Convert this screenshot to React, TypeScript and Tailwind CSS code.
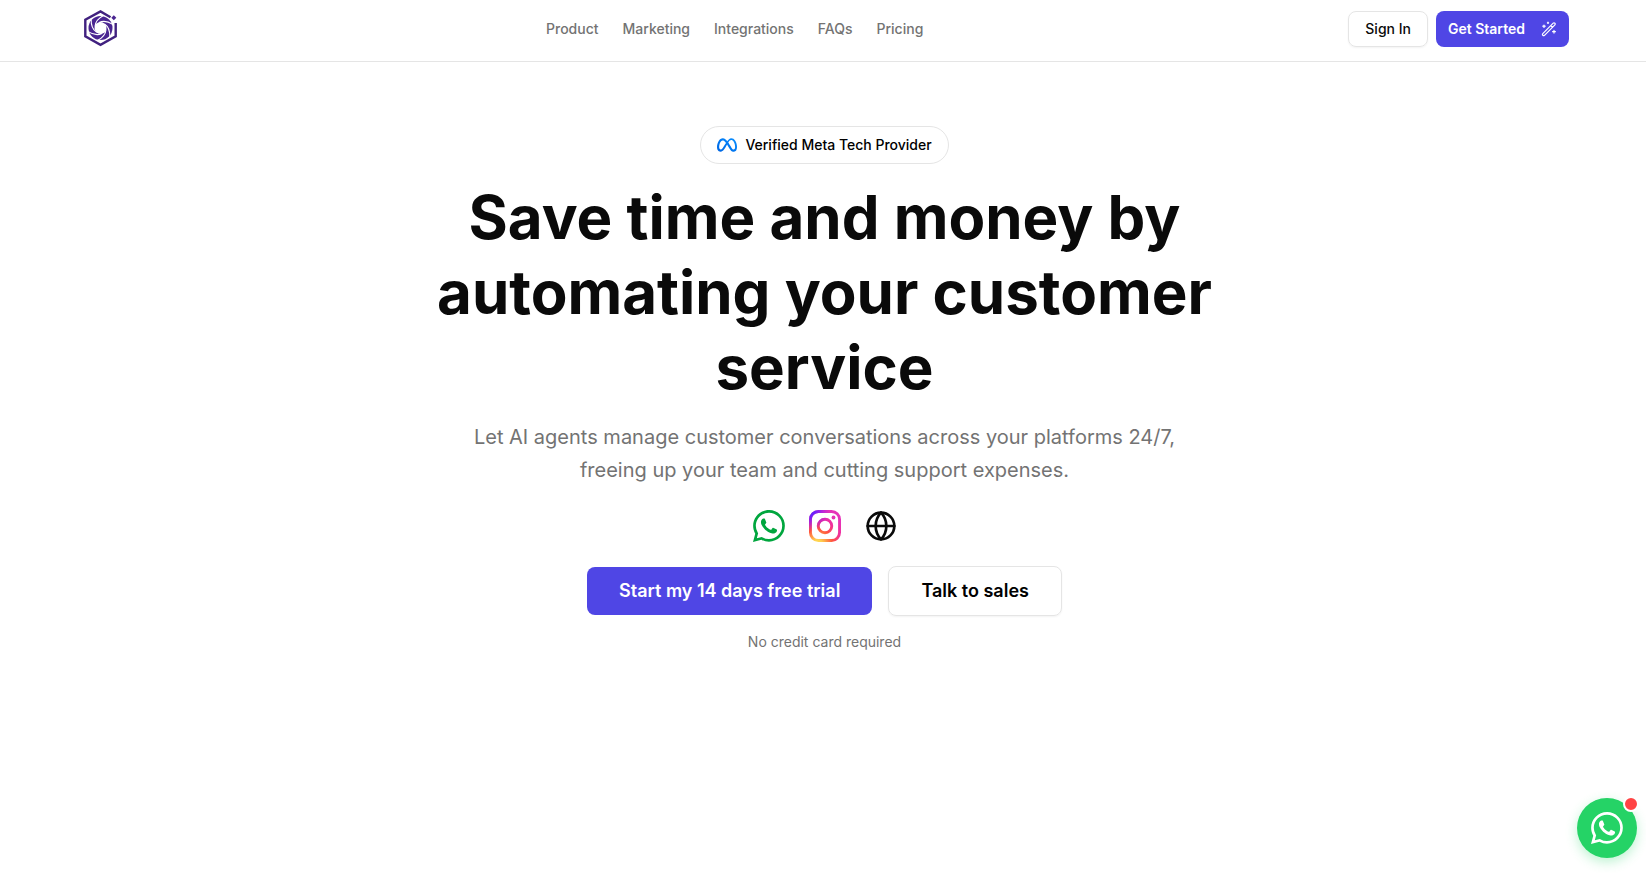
import { Globe } from "lucide-react";
import { BsWhatsapp } from "react-icons/bs";
import { SiMeta } from "react-icons/si";

const NAV_LINKS = ["Product", "Marketing", "Integrations", "FAQs", "Pricing"];
const BLADES = [0, 60, 120, 180, 240, 300];

function Logo() {
  return (
    <svg viewBox="0 0 44 44" className="h-11 w-11" fill="none">
      <path d="M33.500 11.200 23.500 5.400 8.300 13.700V30.300L23.500 38.800 38.700 30.300V17" stroke="#41217f" strokeWidth="2.400" />
      <circle cx="23.500" cy="22" r="12" fill="#4a2591" />
      <circle cx="23.500" cy="22" r="6" fill="#fff" />
      {BLADES.map((angle) => (
        <path
          key={angle}
          d="M18 20.500C18.300 16 20.800 12.500 26.500 9.500"
          stroke="#fff"
          strokeWidth="1.100"
          transform={`rotate(${angle} 23.500 22)`}
        />
      ))}
      <path d="M36.800 9.200 39.300 11.700 36.800 14.200 34.300 11.700Z" fill="#4a2591" />
    </svg>
  );
}

function MagicWand() {
  return (
    <svg viewBox="0 0 16 16" className="h-4 w-4" fill="none" stroke="currentColor" strokeWidth="1.200" strokeLinecap="round" strokeLinejoin="round">
      <path d="M1.800 12.600 12.200 2.200Q13 1.400 13.900 2.200Q14.700 3.100 13.900 3.900L3.500 14.300Q2.600 15.100 1.800 14.300Q1 13.500 1.800 12.600ZM9.800 4.600 11.500 6.300" />
      <path d="M3 4v2.400M1.800 5.200h2.400M7 1.200v1.200M6.400 1.800h1.200M13 9.300v2.800M11.600 10.700h2.800" />
    </svg>
  );
}

function MetaIcon() {
  return (
    <>
      <svg width="0" height="0" className="absolute">
        <linearGradient id="meta" x1="0" y1="1" x2="1" y2="0">
          <stop offset="0" stopColor="#0064e0" />
          <stop offset="0.500" stopColor="#0078f2" />
          <stop offset="1" stopColor="#0c90ff" />
        </linearGradient>
      </svg>
      <SiMeta className="h-5 w-5" style={{ fill: "url(#meta)" }} />
    </>
  );
}

function InstagramIcon() {
  return (
    <svg viewBox="0 0 32 32" className="h-8 w-8" fill="none">
      <defs>
        <radialGradient id="ig-warm" gradientUnits="userSpaceOnUse" cx="8.500" cy="34.500" r="32">
          <stop offset="0" stopColor="#ffdd55" />
          <stop offset="0.150" stopColor="#ffd24f" />
          <stop offset="0.480" stopColor="#ff543e" />
          <stop offset="0.750" stopColor="#f0309a" />
          <stop offset="1" stopColor="#e632b8" />
        </radialGradient>
        <radialGradient id="ig-cool" gradientUnits="userSpaceOnUse" cx="1" cy="1" r="20">
          <stop offset="0" stopColor="#4a2cff" />
          <stop offset="0.300" stopColor="#6a1cff" stopOpacity="0.900" />
          <stop offset="1" stopColor="#a010ff" stopOpacity="0" />
        </radialGradient>
      </defs>
      {["url(#ig-warm)", "url(#ig-cool)"].map((paint) => (
        <g key={paint} stroke={paint} strokeWidth="2.900">
          <rect x="1.450" y="1.450" width="29.100" height="29.100" rx="8" />
          <circle cx="16" cy="16" r="6.750" />
          <circle cx="24.500" cy="7.500" r="1.900" fill={paint} stroke="none" />
        </g>
      ))}
    </svg>
  );
}

function Header() {
  return (
    <header className="border-b border-[#e5e5e5]">
      <div className="mx-auto flex h-[61px] max-w-[1500px] items-start justify-between px-1">
        <a href="#" aria-label="Home" className="mt-1.5">
          <Logo />
        </a>
        <nav className="mt-[19px] flex gap-6 text-sm font-medium text-[#737373]">
          {NAV_LINKS.map((link) => (
            <a key={link} href="#">{link}</a>
          ))}
        </nav>
        <div className="mt-[11px] flex gap-2 text-sm font-medium">
          <button className="h-9 rounded-lg border border-[#e5e5e5] px-4 shadow-xs">Sign In</button>
          <button className="flex h-9 items-center gap-4 rounded-lg bg-[#4f46e5] px-3 font-semibold text-white">
            Get Started
            <MagicWand />
          </button>
        </div>
      </div>
    </header>
  );
}

function Channels() {
  return (
    <div className="mt-[23px] flex justify-center gap-6">
      <BsWhatsapp className="h-8 w-8 text-[#00a63e]" />
      <InstagramIcon />
      <Globe className="h-8 w-8" />
    </div>
  );
}

function Hero() {
  return (
    <main className="mx-auto flex max-w-[820px] flex-col items-center pt-16 pl-[3px] text-center">
      <div className="flex items-center gap-2 rounded-full border border-[#e5e5e5] px-4 py-2 text-sm font-medium text-black">
        <MetaIcon />
        Verified Meta Tech Provider
      </div>
      <h1 className="mt-4 text-6xl leading-[75px] font-bold">
        Save time and money by automating your customer service
      </h1>
      <p className="mt-4 max-w-[720px] text-xl leading-[33px] text-[#737373]">
        Let AI agents manage customer conversations across your platforms 24/7, freeing up your team and cutting support expenses.
      </p>
      <Channels />
      <div className="mt-6 flex items-center gap-4 text-lg font-semibold">
        <button className="h-12 rounded-lg bg-[#4f46e5] px-8 text-white">Start my 14 days free trial</button>
        <button className="h-[50px] rounded-lg border border-[#e5e5e5] px-8 text-black shadow-xs">Talk to sales</button>
      </div>
      <p className="mt-4 text-sm text-[#737373]">No credit card required</p>
    </main>
  );
}

function ChatButton() {
  return (
    <button
      aria-label="Chat on WhatsApp"
      className="fixed right-[9px] bottom-[15px] flex h-[60px] w-[60px] items-center justify-center rounded-full bg-[#25d366] text-white shadow-[0_4px_12px_rgba(37,211,102,0.3)]"
    >
      <BsWhatsapp className="h-8 w-8" />
      <span className="absolute -top-0.5 -right-0.5 h-4 w-4 rounded-full border-2 border-white bg-[#ff4444]" />
    </button>
  );
}

export default function App() {
  return (
    <div className="min-h-screen bg-white font-['Inter',sans-serif] text-[#0a0a0a]">
      <Header />
      <Hero />
      <ChatButton />
    </div>
  );
}
